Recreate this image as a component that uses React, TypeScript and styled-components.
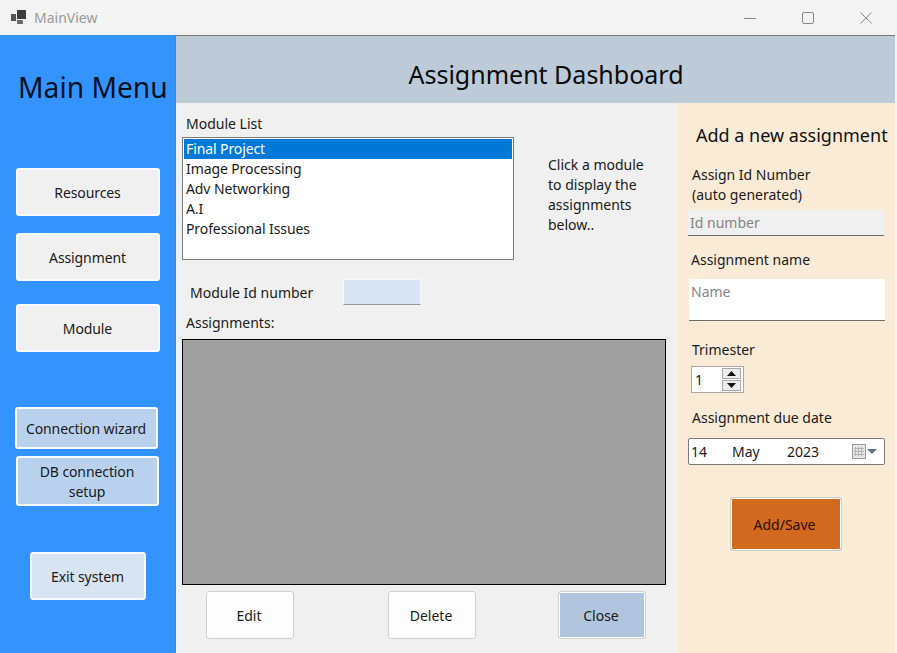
import React from "react";
import styled, { createGlobalStyle } from "styled-components";

const GlobalStyle = createGlobalStyle`
  html, body {
    margin: 0;
    padding: 0;
    background: #f3f3f3;
  }
  body {
    font-family: "Noto Sans", "Open Sans", sans-serif;
    font-size: 14px;
    color: #1a1a1a;
  }
  * {
    box-sizing: border-box;
  }
`;

const Window = styled.div`
  width: 897px;
  height: 653px;
  display: flex;
  flex-direction: column;
  overflow: hidden;
`;

const TitleBar = styled.div`
  height: 35px;
  flex: none;
  display: flex;
  align-items: center;
  padding-left: 11px;
  background: #f3f3f3;
`;

const TitleText = styled.span`
  margin-left: 8px;
  color: #9a9a9a;
  font-size: 14px;
`;

const WindowControls = styled.div`
  margin-left: auto;
  display: flex;
  gap: 46px;
  padding-right: 24px;
  margin-right: 1px;
`;

const Body = styled.div`
  flex: 1;
  display: flex;
  min-height: 0;
  padding-right: 2px;
`;

const Sidebar = styled.nav`
  width: 175px;
  flex: none;
  background: #3394ff;
  display: flex;
  flex-direction: column;
`;

const MenuTitle = styled.h1`
  margin: 34px 0 63px 18px;
  font-size: 28.2px;
  line-height: 36px;
  font-weight: 400;
  color: #06101f;
  white-space: nowrap;
`;

const MenuButton = styled.button<{ $tint?: string; $w?: number; $h?: number; $ml?: number; $mt?: number }>`
  display: block;
  width: ${({ $w }) => $w ?? 144}px;
  height: ${({ $h }) => $h ?? 48}px;
  margin-left: ${({ $ml }) => $ml ?? 16}px;
  margin-top: ${({ $mt }) => $mt ?? 0}px;
  padding: 2px 1px 0 0;
  background: ${({ $tint }) => $tint ?? "#f0f0f0"};
  border: 2px solid #f7fafe;
  border-radius: 3px;
  font: inherit;
  letter-spacing: -0.1px;
  line-height: 20px;
  color: #1a1a1a;
`;

const Main = styled.main`
  flex: 1;
  display: flex;
  flex-direction: column;
  min-width: 0;
  border-left: 1px solid #6f7f90;
  border-top: 1px solid #777;
`;

const Header = styled.header`
  height: 67px;
  flex: none;
  background: #bdcbd9;
  display: flex;
  align-items: center;
  justify-content: center;
  padding: 8px 0 0 21px;
`;

const HeaderTitle = styled.h2`
  margin: 0;
  font-size: 25px;
  font-weight: 400;
  color: #0a0a0a;
`;

const Panels = styled.div`
  flex: 1;
  display: flex;
  min-height: 0;
`;

const ListPanel = styled.section`
  width: 501px;
  flex: none;
  background: #f0f0f0;
  padding: 11px 0 0 6px;
`;

const Label = styled.div<{ $ml?: number; $mt?: number }>`
  margin-left: ${({ $ml }) => $ml ?? 0}px;
  margin-top: ${({ $mt }) => $mt ?? 0}px;
  line-height: 20px;
  white-space: nowrap;
`;

const TopRow = styled.div`
  display: flex;
  margin-top: 3px;
`;

const ListBox = styled.ul`
  width: 332px;
  height: 123px;
  margin: 0;
  padding: 1px;
  list-style: none;
  background: #fff;
  border: 1px solid #7a7a7a;
`;

const ListItem = styled.li<{ $selected?: boolean }>`
  height: 20px;
  line-height: 20px;
  padding-left: 2px;
  letter-spacing: -0.1px;
  background: ${({ $selected }) => ($selected ? "#0078d7" : "transparent")};
  color: ${({ $selected }) => ($selected ? "#fff" : "#1a1a1a")};
`;

const HelpText = styled.p`
  width: 110px;
  margin: 18px 0 0 34px;
  line-height: 20px;
`;

const IdRow = styled.div`
  display: flex;
  align-items: center;
  margin: 19px 0 0 8px;
`;

const IdValue = styled.div`
  width: 78px;
  height: 26px;
  margin-left: 30px;
  background: #d8e4f2;
  border: 1px solid #f4f6f9;
  border-bottom-color: #8e969e;
`;

const Grid = styled.div`
  width: 484px;
  height: 246px;
  margin-top: 6px;
  background: #a0a0a0;
  border: 1px solid #000;
`;

const ActionRow = styled.div`
  display: flex;
  margin: 6px 0 0 24px;
`;

const ActionButton = styled.button<{ $tint?: string; $ml?: number }>`
  width: 88px;
  height: 48px;
  margin-left: ${({ $ml }) => $ml ?? 0}px;
  padding: 0 2px 0 0;
  background: ${({ $tint }) => $tint ?? "#fdfdfd"};
  border: 1px solid #d0d0d0;
  border-radius: 3px;
  box-shadow: ${({ $tint }) => ($tint ? "inset 0 0 0 1px #fff" : "none")};
  font: inherit;
  color: #1a1a1a;
`;

const FormPanel = styled.aside`
  flex: 1;
  background: #faebd7;
  padding: 19px 0 0 11px;
`;

const FormTitle = styled.h3`
  margin: 0 0 0 8px;
  font-size: 18px;
  line-height: 26px;
  font-weight: 400;
  color: #111;
  white-space: nowrap;
`;

const Field = styled.div<{ $bg: string; $h: number; $mt: number; $ml?: number }>`
  width: 196px;
  height: ${({ $h }) => $h}px;
  margin-top: ${({ $mt }) => $mt}px;
  margin-left: ${({ $ml }) => $ml ?? 0}px;
  padding: 3px 2px 0;
  background: ${({ $bg }) => $bg};
  border-bottom: 1px solid #6c6c6c;
  color: #868686;
  line-height: 20px;
`;

const Spinner = styled.div`
  width: 53px;
  height: 27px;
  margin: 6px 0 0 3px;
  display: flex;
  align-items: center;
  justify-content: space-between;
  padding: 0 2px 0 3px;
  background: #fff;
  border: 1px solid #a8a8a8;
`;

const SpinArrows = styled.div`
  display: flex;
  flex-direction: column;
  gap: 1px;
`;

const SpinButton = styled.div`
  width: 19px;
  height: 11px;
  display: flex;
  align-items: center;
  justify-content: center;
  background: #ececec;
  border: 1px solid #a8a8a8;
`;

const DateBox = styled.div`
  width: 197px;
  height: 27px;
  margin-top: 10px;
  display: flex;
  align-items: center;
  padding: 0 3px 0 2px;
  background: #fff;
  border: 1px solid #7a7a7a;
  border-radius: 2px;
`;

const DatePart = styled.span<{ $w: number }>`
  width: ${({ $w }) => $w}px;
  flex: none;
`;

const SaveButton = styled.button`
  display: block;
  width: 112px;
  height: 54px;
  margin: 32px 0 0 42px;
  padding: 0 3px 0 0;
  background: #d2691e;
  border: 1px solid #d4cfc8;
  border-radius: 3px;
  box-shadow: inset 0 0 0 1px #fff;
  font: inherit;
  color: #2a0f02;
`;

const modules = ["Final Project", "Image Processing", "Adv Networking", "A.I", "Professional Issues"];

const AppIcon = () => (
  <svg width="15" height="15" viewBox="0 0 15 15" aria-hidden="true">
    <rect x="6" y="0" width="9" height="9" fill="#3d3d3d" />
    <rect x="0" y="4" width="5" height="7" fill="#555" />
    <rect x="6" y="10" width="6" height="4" fill="#6a6a6a" />
  </svg>
);

const WindowIcon = ({ kind }: { kind: "min" | "max" | "close" }) => (
  <svg width="12" height="12" viewBox="0 0 12 12" fill="none" stroke="#8a8a8a" strokeWidth="1" aria-hidden="true">
    {kind === "min" && <path d="M0 6.5h12" />}
    {kind === "max" && <rect x="0.5" y="0.5" width="11" height="11" rx="1.5" />}
    {kind === "close" && <path d="M0.5 0.5l11 11M11.5 0.5l-11 11" />}
  </svg>
);

const Arrow = ({ up }: { up?: boolean }) => (
  <svg width="9" height="5" viewBox="0 0 9 5" aria-hidden="true">
    <path d={up ? "M4.5 0L9 5H0z" : "M0 0h9L4.5 5z"} fill="#111" />
  </svg>
);

const CalendarIcon = () => (
  <svg width="26" height="17" viewBox="0 0 26 17" aria-hidden="true">
    <rect x="0.5" y="1.5" width="13" height="14" fill="#e6e6e6" stroke="#9a9a9a" />
    <path d="M3.5 4v9M6.5 4v9M9.5 4v9M2 5.5h10M2 8.5h10M2 11.5h10" stroke="#b4b4b4" />
    <path d="M15 6h10l-5 5z" fill="#5f7388" />
  </svg>
);

export default function App() {
  return (
    <Window>
      <GlobalStyle />
      <TitleBar>
        <AppIcon />
        <TitleText>MainView</TitleText>
        <WindowControls>
          <WindowIcon kind="min" />
          <WindowIcon kind="max" />
          <WindowIcon kind="close" />
        </WindowControls>
      </TitleBar>
      <Body>
        <Sidebar>
          <MenuTitle>Main Menu</MenuTitle>
          <MenuButton>Resources</MenuButton>
          <MenuButton $mt={17}>Assignment</MenuButton>
          <MenuButton $mt={23}>Module</MenuButton>
          <MenuButton $tint="#b9d1ec" $ml={15} $w={143} $h={42} $mt={55}>Connection wizard</MenuButton>
          <MenuButton $tint="#b9d1ec" $w={143} $h={50} $mt={7}>DB connection<br />setup</MenuButton>
          <MenuButton $tint="#d8e4f2" $ml={30} $w={116} $mt={46}>Exit system</MenuButton>
        </Sidebar>
        <Main>
          <Header>
            <HeaderTitle>Assignment Dashboard</HeaderTitle>
          </Header>
          <Panels>
            <ListPanel>
              <Label $ml={4}>Module List</Label>
              <TopRow>
                <ListBox>
                  {modules.map((m, i) => (
                    <ListItem key={m} $selected={i === 0}>{m}</ListItem>
                  ))}
                </ListBox>
                <HelpText>Click a module to display the assignments below..</HelpText>
              </TopRow>
              <IdRow>
                <span>Module Id number</span>
                <IdValue />
              </IdRow>
              <Label $ml={4} $mt={8}>Assignments:</Label>
              <Grid />
              <ActionRow>
                <ActionButton>Edit</ActionButton>
                <ActionButton $ml={94}>Delete</ActionButton>
                <ActionButton $ml={82} $tint="#b0c4de">Close</ActionButton>
              </ActionRow>
            </ListPanel>
            <FormPanel>
              <FormTitle>Add a new assignment</FormTitle>
              <Label $ml={4} $mt={17}>Assign Id Number</Label>
              <Label $ml={4}>(auto generated)</Label>
              <Field $bg="#f0f0f0" $h={26} $mt={5}>Id number</Field>
              <Label $ml={3} $mt={14}>Assignment name</Label>
              <Field $bg="#fff" $h={42} $mt={9} $ml={1}>Name</Field>
              <Label $ml={4} $mt={19}>Trimester</Label>
              <Spinner>
                <span>1</span>
                <SpinArrows>
                  <SpinButton><Arrow up /></SpinButton>
                  <SpinButton><Arrow /></SpinButton>
                </SpinArrows>
              </Spinner>
              <Label $ml={4} $mt={15}>Assignment due date</Label>
              <DateBox>
                <DatePart $w={41}>14</DatePart>
                <DatePart $w={55}>May</DatePart>
                <DatePart $w={65}>2023</DatePart>
                <CalendarIcon />
              </DateBox>
              <SaveButton>Add/Save</SaveButton>
            </FormPanel>
          </Panels>
        </Main>
      </Body>
    </Window>
  );
}
